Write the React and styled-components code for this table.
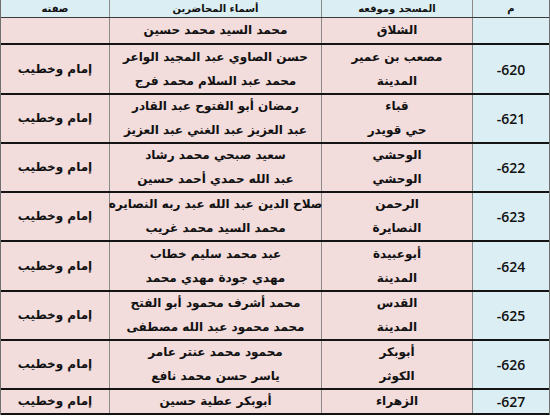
import React from "react";
import styled, { createGlobalStyle } from "styled-components";

const rows = [
  { num: "", mosque: ["الشلاق"], names: ["محمد السيد محمد حسين"], role: "", h: 27 },
  { num: "-620", mosque: ["مصعب بن عمير", "المدينة"], names: ["حسن الصاوي عبد المجيد الواعر", "محمد عبد السلام محمد فرج"], role: "إمام وخطيب", h: 50 },
  { num: "-621", mosque: ["قباء", "حي قويدر"], names: ["رمضان أبو الفتوح عبد القادر", "عبد العزيز عبد الغني عبد العزيز"], role: "إمام وخطيب", h: 49 },
  { num: "-622", mosque: ["الوحشي", "الوحشي"], names: ["سعيد صبحي محمد رشاد", "عبد الله حمدي أحمد حسين"], role: "إمام وخطيب", h: 49 },
  { num: "-623", mosque: ["الرحمن", "النصايرة"], names: ["صلاح الدين عبد الله عبد ربه النصايره", "محمد السيد محمد غريب"], role: "إمام وخطيب", h: 49 },
  { num: "-624", mosque: ["أبوعبيدة", "المدينة"], names: ["عبد محمد سليم خطاب", "مهدي جودة مهدي محمد"], role: "إمام وخطيب", h: 50 },
  { num: "-625", mosque: ["القدس", "المدينة"], names: ["محمد أشرف محمود أبو الفتح", "محمد محمود عبد الله مصطفى"], role: "إمام وخطيب", h: 49 },
  { num: "-626", mosque: ["أبوبكر", "الكوثر"], names: ["محمود محمد عنتر عامر", "ياسر حسن محمد نافع"], role: "إمام وخطيب", h: 49 },
  { num: "-627", mosque: ["الزهراء"], names: ["أبوبكر عطية حسين"], role: "إمام وخطيب", h: 25 },
];

const GlobalStyle = createGlobalStyle`
  html, body {
    margin: 0;
    padding: 0;
    background: #ffffff;
  }
`;

const Table = styled.div`
  width: 550px;
  direction: rtl;
  font-family: "DejaVu Sans", sans-serif;
  color: #111;
  border-right: 1px solid #6f6f6f;
  border-left: 1px solid #6f6f6f;
  box-sizing: border-box;
`;

const Row = styled.div`
  display: grid;
  grid-template-columns: 77px 151px 212px 1fr;
  height: ${(p) => p.$h}px;
  box-sizing: border-box;
  border-bottom: ${(p) => (p.$head ? "1px solid #3a3a3a" : "2px solid #141414")};
`;

const Cell = styled.div`
  display: flex;
  flex-direction: column;
  align-items: center;
  justify-content: center;
  gap: ${(p) => (p.$head ? 0 : 9)}px;
  background: ${(p) => (p.$blue ? "#dbeef4" : "#f2dcdc")};
  border-left: 1px solid #8a8a8a;
  &:last-child {
    border-left: none;
  }
`;

const HeadText = styled.span`
  font-size: 10px;
  font-weight: 900;
  line-height: 1;
`;

const Line = styled.span`
  font-size: 12px;
  font-weight: bold;
  line-height: 15px;
  white-space: nowrap;
`;

const Num = styled.span`
  direction: ltr;
  font-family: "Open Sans", "Liberation Sans", sans-serif;
  font-size: 14px;
  font-weight: 600;
`;

export default function App() {
  return (
    <>
      <GlobalStyle />
      <Table>
        <Row $head $h={18}>
          <Cell $head $blue><HeadText>م</HeadText></Cell>
          <Cell $head $blue><HeadText>المسجد وموقعه</HeadText></Cell>
          <Cell $head $blue><HeadText>أسماء المحاضرين</HeadText></Cell>
          <Cell $head $blue><HeadText>صفته</HeadText></Cell>
        </Row>
        {rows.map((r, i) => (
          <Row key={i} $h={r.h}>
            <Cell $blue>{r.num && <Num>{r.num}</Num>}</Cell>
            <Cell>{r.mosque.map((m, j) => <Line key={j}>{m}</Line>)}</Cell>
            <Cell>{r.names.map((n, j) => <Line key={j}>{n}</Line>)}</Cell>
            <Cell>{r.role && <Line>{r.role}</Line>}</Cell>
          </Row>
        ))}
      </Table>
    </>
  );
}
